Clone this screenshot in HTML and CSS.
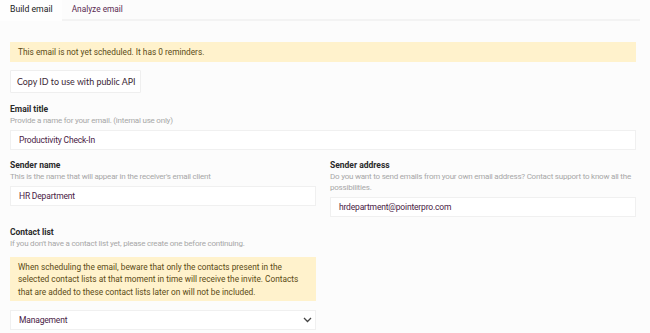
FILE: index.html
```html
<!DOCTYPE html>
<html>
<head>
<meta charset="utf-8">
<link rel="stylesheet" href="styles.css">
</head>
<body>
<div class="tabs">
  <div class="tab active">Build email</div>
  <div class="tab">Analyze email</div>
  <div class="tab-fill"></div>
</div>
<div class="content">
  <div class="banner">This email is not yet scheduled. It has 0 reminders.</div>
  <div class="btn-row"><button class="btn">Copy ID to use with public API</button></div>
  <div class="field">
    <div class="label">Email title</div>
    <div class="help">Provide a name for your email. (internal use only)</div>
    <div class="input">Productivity Check-In</div>
  </div>
  <div class="cols">
    <div class="field">
      <div class="label">Sender name</div>
      <div class="help">This is the name that will appear in the receiver's email client</div>
      <div class="input">HR Department</div>
    </div>
    <div class="field">
      <div class="label">Sender address</div>
      <div class="help">Do you want to send emails from your own email address? Contact support to know all the possibilities.</div>
      <div class="input">hrdepartment@pointerpro.com</div>
    </div>
  </div>
  <div class="cols">
    <div class="field">
      <div class="label">Contact list</div>
      <div class="help">If you don't have a contact list yet, please create one before continuing.</div>
      <div class="note">When scheduling the email, beware that only the contacts present in the selected contact lists at that moment in time will receive the invite. Contacts that are added to these contact lists later on will not be included.</div>
      <div class="input select">Management
        <svg class="chev" width="9" height="6" viewBox="0 0 9 6"><path d="M1 1l3.5 3.5L8 1" fill="none" stroke="#444" stroke-width="1.3"/></svg>
      </div>
    </div>
    <div></div>
  </div>
</div>
</body>
</html>
```
FILE: styles.css
```css
html, body { margin: 0; padding: 0; }
body {
  background: #fcfcfc;
  font-family: Roboto, "Liberation Sans", sans-serif;
  width: 650px;
  height: 333px;
  overflow: hidden;
}
.tabs {
  display: flex;
  height: 21px;
  width: 640px;
}
.tab {
  font-size: 8.3px;
  line-height: 19px;
  padding: 0 10px 0 10px;
  color: #5a2a50;
  border-bottom: 2px solid #f3f3f3;
}
.tab.active {
  font-size: 8.7px;
  color: #222;
  background: #fefefe;
  border-bottom-color: transparent;
  padding: 0 9px 0 10px;
}
.tab-fill { flex: 1; border-bottom: 2px solid #f3f3f3; }
.content {
  padding: 21px 14px 0 10px;
  display: flex;
  flex-direction: column;
}
.banner {
  background: #fff2cc;
  color: #5b4a14;
  font-size: 8.3px;
  height: 20px;
  line-height: 20px;
  padding: 0 8px;
}
.btn-row { margin-top: 8px; display: flex; }
.btn {
  font-family: Lato, sans-serif;
  font-size: 8.9px;
  color: #3a1f35;
  background: #fff;
  border: 1px solid #efefef;
  height: 23px;
  padding: 0 4px 0 6px;
  border-radius: 1px;
}
.field { display: flex; flex-direction: column; margin-top: 8.5px; }
.btn-row + .field { margin-top: 9.5px; }
.label {
  font-size: 8.5px;
  font-weight: 700;
  color: #2a2a2a;
  line-height: 12px;
}
.help {
  font-size: 8px;
  letter-spacing: -0.22px;
  color: #a7a7a7;
  line-height: 11px;
}
.input {
  margin-top: 4.5px;
  background: #fff;
  border: 1px solid #f0f0f0;
  height: 18px;
  line-height: 18px;
  font-size: 8.5px;
  letter-spacing: -0.18px;
  color: #4a2145;
  padding: 0 8px;
}
.cols {
  display: grid;
  grid-template-columns: 306px 306px;
  column-gap: 14px;
  align-items: start;
}
.note {
  margin-top: 8px;
  background: #fff2cc;
  color: #5b4a14;
  font-size: 8.3px;
  line-height: 12.5px;
  padding: 4px 9px 3px 8px;
}
.select {
  margin-top: 9px;
  display: flex;
  justify-content: space-between;
  align-items: center;
  padding-right: 3px;
}
```
